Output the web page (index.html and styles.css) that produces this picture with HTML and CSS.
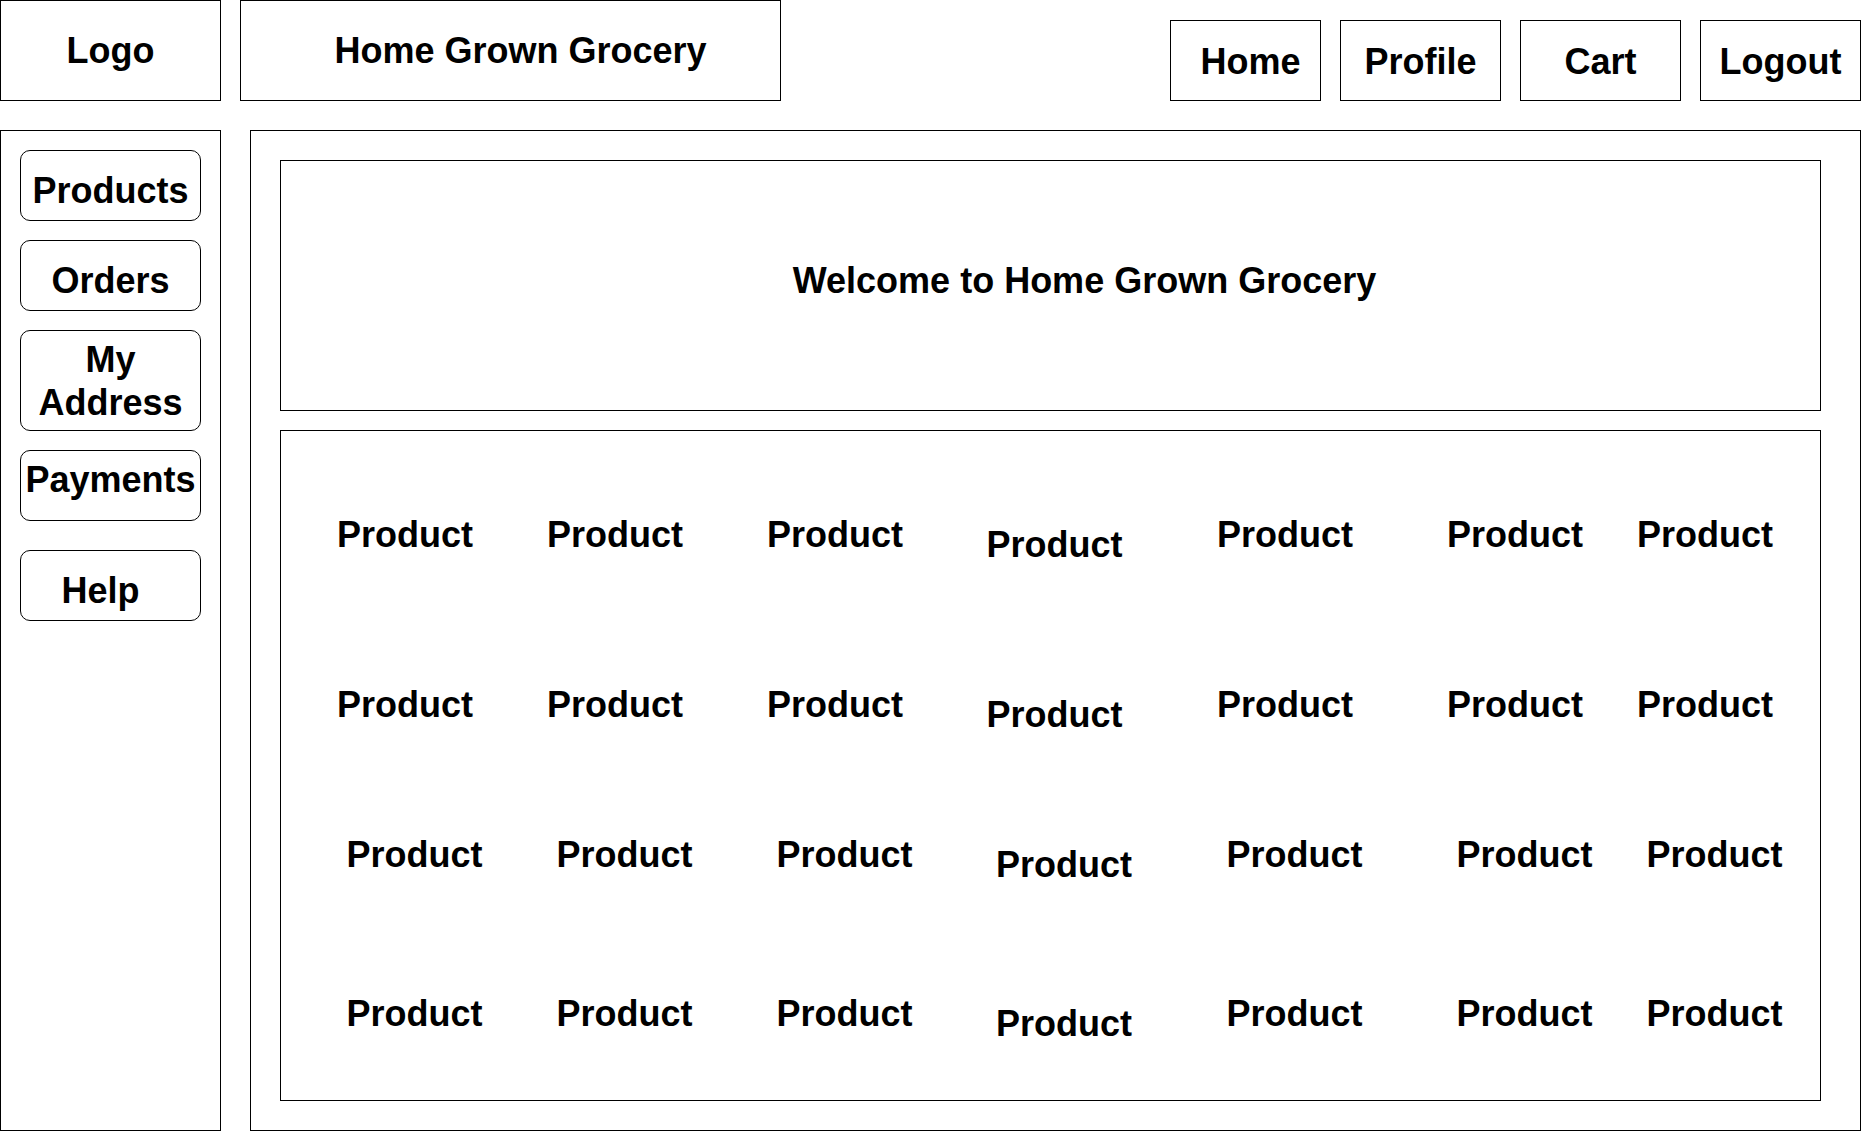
FILE: index.html
```html
<!DOCTYPE html>
<html lang="en">
<head>
<meta charset="utf-8">
<title>Home Grown Grocery</title>
<link rel="stylesheet" href="styles.css">
</head>
<body>
<div class="page">
  <header class="topbar">
    <div class="box logo">Logo</div>
    <div class="box title">Home Grown Grocery</div>
    <nav class="nav">
      <a class="box navbtn home">Home</a>
      <a class="box navbtn">Profile</a>
      <a class="box navbtn">Cart</a>
      <a class="box navbtn">Logout</a>
    </nav>
  </header>
  <div class="layout">
    <aside class="sidebar">
      <div class="sbtn">Products</div>
      <div class="sbtn">Orders</div>
      <div class="sbtn tall">My Address</div>
      <div class="sbtn pay">Payments</div>
      <div class="sbtn help">Help</div>
    </aside>
    <main class="main">
      <section class="box welcome">Welcome to Home Grown Grocery</section>
      <section class="products">
        <div class="prow">
          <div class="prod">Product</div><div class="prod">Product</div><div class="prod">Product</div><div class="prod low">Product</div><div class="prod">Product</div><div class="prod">Product</div><div class="prod">Product</div>
        </div>
        <div class="prow">
          <div class="prod">Product</div><div class="prod">Product</div><div class="prod">Product</div><div class="prod low">Product</div><div class="prod">Product</div><div class="prod">Product</div><div class="prod">Product</div>
        </div>
        <div class="prow shift">
          <div class="prod">Product</div><div class="prod">Product</div><div class="prod">Product</div><div class="prod low">Product</div><div class="prod">Product</div><div class="prod">Product</div><div class="prod">Product</div>
        </div>
        <div class="prow shift">
          <div class="prod">Product</div><div class="prod">Product</div><div class="prod">Product</div><div class="prod low">Product</div><div class="prod">Product</div><div class="prod">Product</div><div class="prod">Product</div>
        </div>
      </section>
    </main>
  </div>
</div>
</body>
</html>
```
FILE: styles.css
```css
* {
  box-sizing: border-box;
}

body {
  margin: 0;
  background: #ffffff;
  color: #000000;
  font-family: "Liberation Sans", Arial, Helvetica, sans-serif;
  font-weight: bold;
  font-size: 36px;
}

.page {
  width: 1861px;
}

.box {
  border: 1px solid #000000;
  display: flex;
  align-items: center;
  justify-content: center;
}

.topbar {
  display: flex;
  align-items: flex-start;
  height: 101px;
}

.logo {
  width: 221px;
  height: 101px;
}

.title {
  width: 541px;
  height: 101px;
  margin-left: 19px;
  padding-left: 20px;
}

.nav {
  margin-left: auto;
  margin-top: 20px;
  display: flex;
  gap: 19px;
}

.navbtn {
  width: 161px;
  height: 81px;
  padding-top: 2px;
  color: #000000;
  text-decoration: none;
}

.navbtn.home {
  width: 151px;
  padding-left: 10px;
}

.layout {
  display: flex;
  gap: 29px;
  margin-top: 29px;
}

.sidebar {
  width: 221px;
  height: 1001px;
  border: 1px solid #000000;
  padding: 19px 0 0 19px;
  display: flex;
  flex-direction: column;
  gap: 19px;
}

.sbtn {
  width: 181px;
  height: 71px;
  border: 1px solid #000000;
  border-radius: 10px;
  display: flex;
  align-items: center;
  justify-content: center;
  text-align: center;
  line-height: 43px;
  padding-top: 9px;
}

.sbtn.tall {
  height: 101px;
  padding-top: 0;
}

.sbtn.pay {
  padding-top: 0;
  padding-bottom: 13px;
}

.sbtn.help {
  margin-top: 10px;
  padding-top: 10px;
  padding-right: 20px;
}

.main {
  width: 1611px;
  height: 1001px;
  border: 1px solid #000000;
  padding: 29px;
}

.welcome {
  width: 1541px;
  height: 251px;
  padding-left: 68px;
  padding-bottom: 9px;
}

.products {
  width: 1541px;
  height: 671px;
  margin-top: 19px;
  border: 1px solid #000000;
  padding-top: 84px;
  display: grid;
  grid-template-rows: 170px 150px 159px 40px;
}

.prow {
  display: grid;
  grid-template-columns: 210px 210px 230px 209px 252px 208px 172px;
  align-items: start;
  padding-left: 19px;
}

.prow.shift {
  padding-left: 28.5px;
}

.prod {
  text-align: center;
  line-height: 40px;
}

.prod.low {
  padding-top: 10px;
}
```
